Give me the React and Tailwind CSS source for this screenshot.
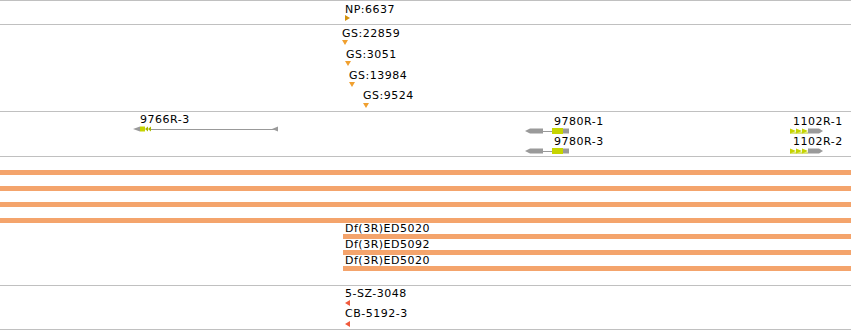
import React from "react";

const font = "block font-['DejaVu_Sans',sans-serif] text-[11px] leading-[12px] tracking-[0.5px] text-black whitespace-nowrap";

const DownTri = ({ className = "" }) => (
  <svg width="6" height="5" className={`block shrink-0 ${className}`}>
    <polygon points="0,0 6,0 3,5" fill="#f0a030" />
  </svg>
);

const LeftTri = ({ className = "" }) => (
  <svg width="5" height="6" className={`block shrink-0 ${className}`}>
    <polygon points="0,3 5,0 5,6" fill="#f05a3c" />
  </svg>
);

// gene model: arrow head, coding block and the long intron line
const Gene9766 = ({ className = "" }) => (
  <svg width="148" height="8" className={`block shrink-0 ${className}`}>
    <line x1="18" y1="4.5" x2="146" y2="4.5" stroke="#999" strokeWidth="1" />
    <polygon points="1,4 8,1.5 8,6.5" fill="#9a9a9a" />
    <rect x="8" y="1.5" width="5" height="5" fill="#c6d400" />
    <polygon points="13,4 16,1.5 16,6.5" fill="#a9b800" />
    <polygon points="16,4 19,1.5 19,6.5" fill="#a9b800" />
    <polygon points="140,4 146,1.5 146,6.5" fill="#9a9a9a" />
  </svg>
);

const Gene9780 = ({ className = "" }) => (
  <svg width="48" height="8" className={`block shrink-0 ${className}`}>
    <line x1="18" y1="4.5" x2="29" y2="4.5" stroke="#999" strokeWidth="1" />
    <polygon points="1,4 6,1.5 19,1.5 19,6.5 6,6.5" fill="#9a9a9a" />
    <rect x="28" y="1" width="11" height="6" fill="#c6d400" />
    <rect x="39" y="1.5" width="6" height="5" fill="#9a9a9a" />
  </svg>
);

const Gene1102 = ({ className = "" }) => (
  <svg width="36" height="8" className={`block shrink-0 ${className}`}>
    <line x1="1" y1="6" x2="19" y2="6" stroke="#b8c800" strokeWidth="1" />
    <polygon points="1,1.5 7,4 1,6.5" fill="#c6d400" />
    <polygon points="7,1.5 13,4 7,6.5" fill="#c6d400" />
    <polygon points="13,1.5 19,4 13,6.5" fill="#c6d400" />
    <polygon points="19,1.5 30,1.5 34,4 30,6.5 19,6.5" fill="#9a9a9a" />
  </svg>
);

const Bar = ({ className = "" }) => <div className={`h-[5px] bg-[#f4a46c] ${className}`} />;

export default function App() {
  return (
    <div className="w-[851px] h-[330px] bg-white overflow-hidden flex flex-col">
      {/* NP track */}
      <div className="h-[24px] border-t border-[#c0c0c0] flex flex-col items-start pt-[3px] pl-[345px]">
        <span className={font}>NP:6637</span>
        <svg width="5" height="6" className="block -mt-px">
          <polygon points="0,0 5,3 0,6" fill="#d4920e" />
        </svg>
      </div>

      {/* GS track */}
      <div className="h-[87px] border-t border-[#c0c0c0] flex flex-col items-start pt-[3px]">
        <div className="pl-[342px]">
          <span className={font}>GS:22859</span>
          <DownTri />
        </div>
        <div className="pl-[346px] mt-[4px]">
          <span className={font}>GS:3051</span>
          <DownTri className="-ml-px" />
        </div>
        <div className="pl-[349px] mt-[4px]">
          <span className={font}>GS:13984</span>
          <DownTri />
        </div>
        <div className="pl-[363px] mt-[3px]">
          <span className={font}>GS:9524</span>
          <DownTri className="mt-px" />
        </div>
      </div>

      {/* gene track */}
      <div className="h-[45px] border-t border-[#c0c0c0] flex items-start pl-[132px]">
        <div className="w-[148px] shrink-0 pt-[2px]">
          <span className={`${font} pl-[8px]`}>9766R-3</span>
          <Gene9766 className="-mt-px" />
        </div>
        <div className="w-[48px] shrink-0 ml-[244px] pt-[4px]">
          <span className={`${font} pl-[30px]`}>9780R-1</span>
          <Gene9780 className="-mt-px" />
          <span className={`${font} pl-[30px] mt-px`}>9780R-3</span>
          <Gene9780 className="-mt-px" />
        </div>
        <div className="w-[36px] shrink-0 ml-[217px] pt-[4px]">
          <span className={`${font} pl-[4px]`}>1102R-1</span>
          <Gene1102 className="-mt-px" />
          <span className={`${font} pl-[4px] mt-px`}>1102R-2</span>
          <Gene1102 className="-mt-px" />
        </div>
      </div>

      {/* deficiency track */}
      <div className="h-[129px] border-t border-[#c0c0c0] flex flex-col pt-[13px]">
        <div className="flex flex-col gap-[11px]">
          <Bar />
          <Bar />
          <Bar />
          <Bar />
        </div>
        <div className="flex flex-col pl-[343px]">
          <span className={`${font} pl-[2px]`}>Df(3R)ED5020</span>
          <Bar className="-mt-px" />
          <span className={`${font} pl-[2px]`}>Df(3R)ED5092</span>
          <Bar className="-mt-px" />
          <span className={`${font} pl-[2px]`}>Df(3R)ED5020</span>
          <Bar className="-mt-px" />
        </div>
      </div>

      {/* insertion track */}
      <div className="h-[45px] border-y border-[#c0c0c0] flex flex-col items-start pt-[2px] pl-[345px]">
        <span className={font}>5-SZ-3048</span>
        <LeftTri />
        <span className={`${font} mt-[2px]`}>CB-5192-3</span>
        <LeftTri className="mt-px" />
      </div>
    </div>
  );
}
